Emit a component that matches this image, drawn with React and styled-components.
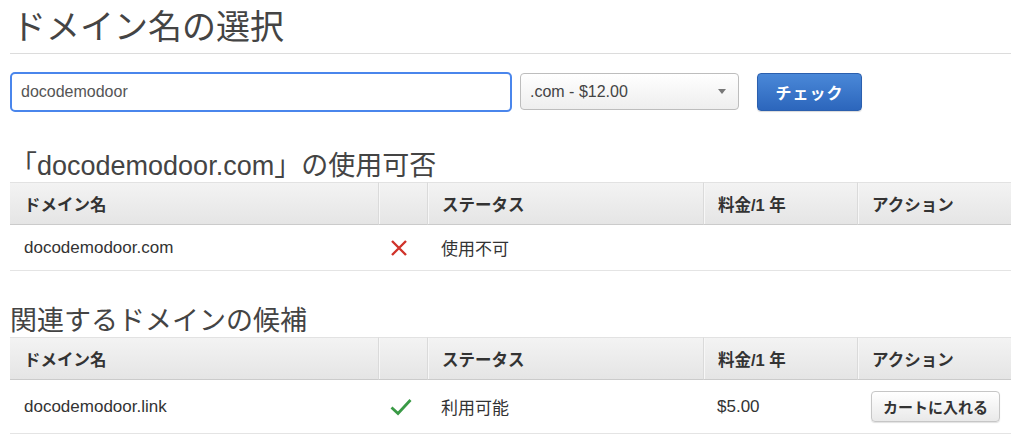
import React from "react";
import styled, { createGlobalStyle } from "styled-components";

const GlobalStyle = createGlobalStyle`
  * { box-sizing: border-box; }
  body {
    margin: 0;
    background: #fff;
    font-family: "Liberation Sans", "Noto Sans CJK JP", sans-serif;
    color: #333;
  }
`;

const Page = styled.div`
  padding: 7px 13px 0 10px;
`;

const Title = styled.h1`
  margin: 0;
  padding: 0 0 6px 2px;
  font-size: 34px;
  line-height: 40px;
  font-weight: normal;
  color: #444;
  border-bottom: 1px solid #dcdcdc;
`;

const SearchRow = styled.div`
  display: flex;
  align-items: flex-start;
  margin-top: 18px;
`;

const DomainInput = styled.input`
  width: 502px;
  height: 40px;
  padding: 0 9px;
  border: 2px solid #4a86ec;
  border-radius: 5px;
  font-family: inherit;
  font-size: 16px;
  color: #555;
  outline: none;
`;

const SelectBox = styled.div`
  position: relative;
  width: 219px;
  height: 37px;
  margin: 1px 0 0 8px;
  padding: 0 0 0 9px;
  display: flex;
  align-items: center;
  border: 1px solid #bdbdbd;
  border-radius: 4px;
  background: linear-gradient(#ffffff, #eeeeee);
  font-size: 16px;
  color: #444;
`;

const Caret = styled.span`
  position: absolute;
  right: 12px;
  top: 15px;
  border-left: 4px solid transparent;
  border-right: 4px solid transparent;
  border-top: 5px solid #777;
`;

const CheckButton = styled.button`
  width: 105px;
  height: 38px;
  margin: 1px 0 0 18px;
  border: 1px solid #2b5fae;
  border-radius: 4px;
  background: linear-gradient(#4a88d8, #2c66bc);
  color: #fff;
  font-family: inherit;
  font-size: 16px;
  font-weight: bold;
  letter-spacing: 1px;
  box-shadow: 0 1px 1px rgba(0, 0, 0, 0.15);
`;

const SectionTitle = styled.h2`
  margin: ${(p) => p.$top}px 0 1px 0;
  font-size: 27px;
  line-height: 30px;
  font-weight: normal;
  color: #444;
`;

const Table = styled.table`
  width: 1001px;
  table-layout: fixed;
  border-collapse: separate;
  border-spacing: 0;
`;

const Th = styled.th`
  height: 43px;
  padding: 0 14px;
  text-align: left;
  font-size: 16.5px;
  font-weight: bold;
  color: #333;
  background: linear-gradient(#f3f3f3, #e5e5e5);
  border-top: 1px solid #e2e2e2;
  border-bottom: 1px solid #cbcbcb;
  & + & {
    border-left: 1px solid #dadada;
    box-shadow: inset 1px 0 0 #f7f7f7;
  }
`;

const Td = styled.td`
  height: ${(p) => p.$h}px;
  padding: 0 14px;
  font-size: 17px;
  color: #333;
  border-bottom: 1px solid #e4e4e4;
  vertical-align: middle;
`;

const IconTd = styled(Td)`
  padding: 0 0 0 12px;
`;

const CartButton = styled.button`
  width: 129px;
  height: 31px;
  border: 1px solid #c6c6c6;
  border-radius: 4px;
  background: linear-gradient(#ffffff, #e9e9e9);
  box-shadow: 0 1px 1px rgba(0, 0, 0, 0.12);
  font-family: inherit;
  font-size: 15px;
  font-weight: bold;
  color: #333;
`;

const CrossIcon = () => (
  <svg width="18" height="18" viewBox="0 0 18 18" style={{ display: "block" }}>
    <path d="M2 2 L16 16 M16 2 L2 16" stroke="#d0332a" strokeWidth="2.4" strokeLinecap="butt" />
  </svg>
);

const CheckIcon = () => (
  <svg width="22" height="18" viewBox="0 0 22 18" style={{ display: "block" }}>
    <path d="M1.5 9.5 L8 15.5 L20.5 2" fill="none" stroke="#3a9a46" strokeWidth="2.8" />
  </svg>
);

const columns = [368, 49, 276, 154, 154];

function ResultTable({ rows, rowHeight }) {
  return (
    <Table>
      <colgroup>
        {columns.map((w, i) => (
          <col key={i} style={{ width: w }} />
        ))}
      </colgroup>
      <thead>
        <tr>
          <Th>ドメイン名</Th>
          <Th></Th>
          <Th>ステータス</Th>
          <Th>料金/1 年</Th>
          <Th>アクション</Th>
        </tr>
      </thead>
      <tbody>
        {rows.map((r) => (
          <tr key={r.name}>
            <Td $h={rowHeight}>{r.name}</Td>
            <IconTd $h={rowHeight}>{r.available ? <CheckIcon /> : <CrossIcon />}</IconTd>
            <Td $h={rowHeight}>{r.status}</Td>
            <Td $h={rowHeight}>{r.price}</Td>
            <Td $h={rowHeight}>{r.available && <CartButton>カートに入れる</CartButton>}</Td>
          </tr>
        ))}
      </tbody>
    </Table>
  );
}

export default function App() {
  return (
    <Page>
      <GlobalStyle />
      <Title>ドメイン名の選択</Title>
      <SearchRow>
        <DomainInput defaultValue="docodemodoor" />
        <SelectBox>
          .com - $12.00
          <Caret />
        </SelectBox>
        <CheckButton>チェック</CheckButton>
      </SearchRow>

      <SectionTitle $top={39}>「docodemodoor.com」の使用可否</SectionTitle>
      <ResultTable
        rowHeight={46}
        rows={[{ name: "docodemodoor.com", available: false, status: "使用不可", price: "" }]}
      />

      <SectionTitle $top={35}>関連するドメインの候補</SectionTitle>
      <ResultTable
        rowHeight={54}
        rows={[{ name: "docodemodoor.link", available: true, status: "利用可能", price: "$5.00" }]}
      />
    </Page>
  );
}
